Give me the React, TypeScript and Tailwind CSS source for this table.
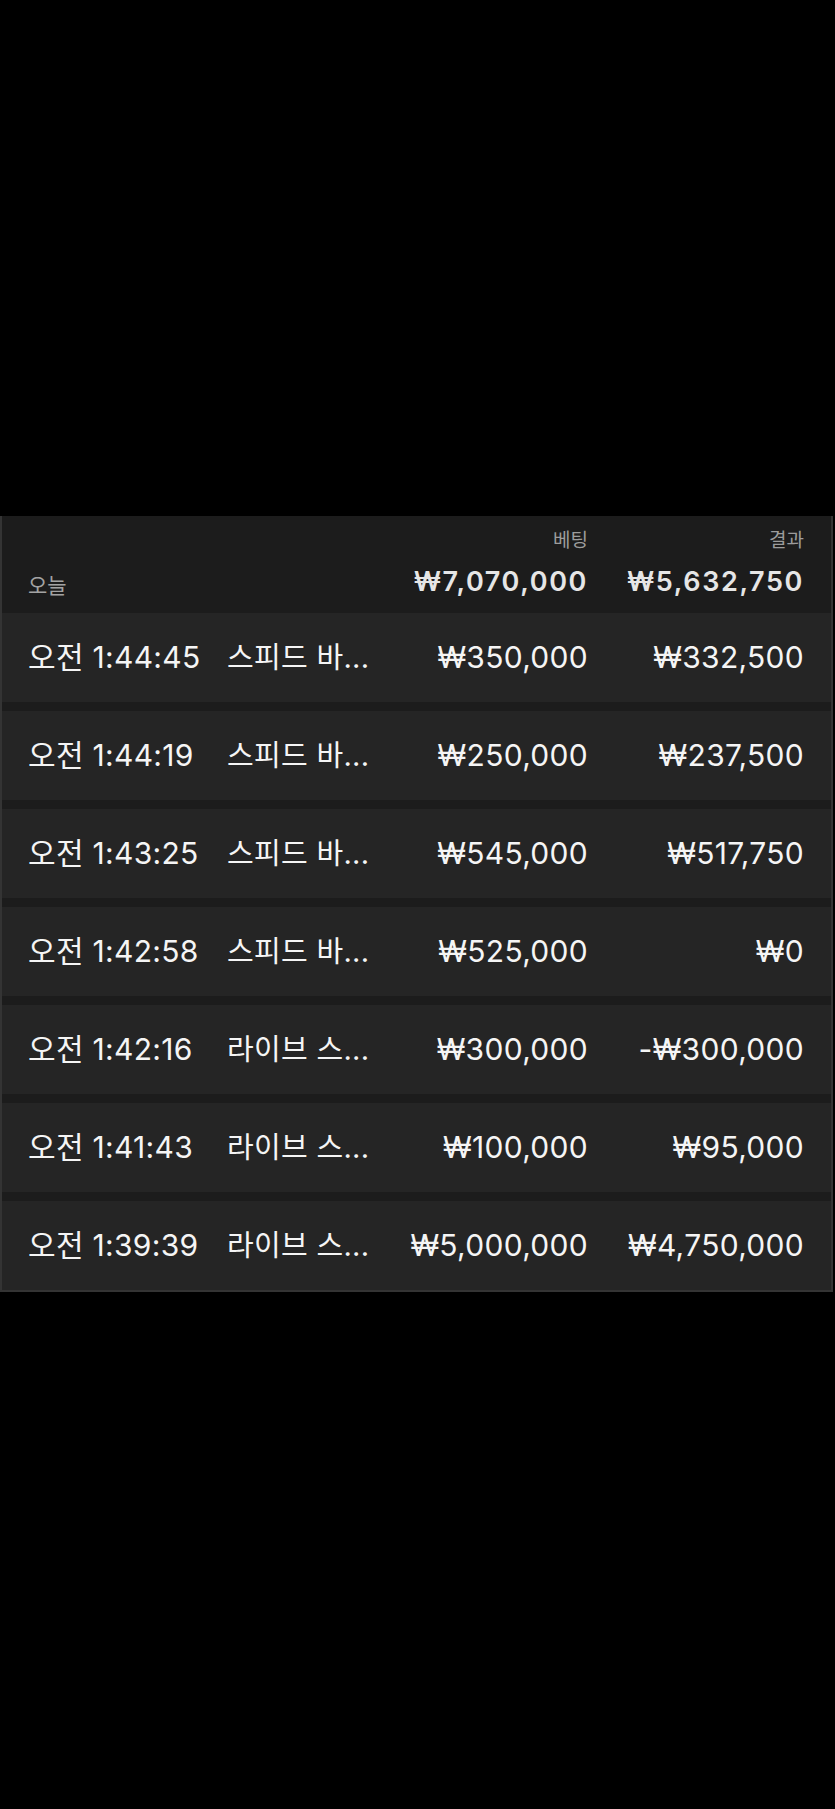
import React from "react";

type Bet = {
  time: string;
  game: string;
  stake: string;
  result: string;
};

const bets: Bet[] = [
  { time: "오전 1:44:45", game: "스피드 바...", stake: "₩350,000", result: "₩332,500" },
  { time: "오전 1:44:19", game: "스피드 바...", stake: "₩250,000", result: "₩237,500" },
  { time: "오전 1:43:25", game: "스피드 바...", stake: "₩545,000", result: "₩517,750" },
  { time: "오전 1:42:58", game: "스피드 바...", stake: "₩525,000", result: "₩0" },
  { time: "오전 1:42:16", game: "라이브 스...", stake: "₩300,000", result: "-₩300,000" },
  { time: "오전 1:41:43", game: "라이브 스...", stake: "₩100,000", result: "₩95,000" },
  { time: "오전 1:39:39", game: "라이브 스...", stake: "₩5,000,000", result: "₩4,750,000" },
];

const cols = "grid grid-cols-[199px_minmax(0,1fr)_200px_216px] pl-[26px] pr-[27px]";

export default function App() {
  return (
    <div
      className="min-h-screen bg-black"
      style={{ fontFamily: "Inter, 'Noto Sans CJK KR', sans-serif" }}
    >
      <div className="h-[516px]" />

      <section className="mr-[2px] border-x-2 border-b-2 border-[#343434] bg-[#1c1c1c]">
        {/* today summary */}
        <div className={`${cols} h-[97px] items-end pb-[15px]`}>
          <span className="col-span-2 mb-[-1px] text-[21px] leading-[26px] text-[#a3a3a3]">오늘</span>
          <div className="flex flex-col items-end">
            <span className="text-[19px] leading-[26px] text-[#9c9c9c]">베팅</span>
            <span className="mt-[12px] text-[27px] font-semibold leading-[32px] tracking-[0.06em] text-[#e6e6e6]">
              ₩7,070,000
            </span>
          </div>
          <div className="flex flex-col items-end">
            <span className="text-[19px] leading-[26px] text-[#9c9c9c]">결과</span>
            <span className="mt-[12px] text-[27px] font-semibold leading-[32px] tracking-[0.06em] text-[#e6e6e6]">
              ₩5,632,750
            </span>
          </div>
        </div>

        <div className="flex flex-col gap-[9px]">
          {bets.map((bet) => (
            <div
              key={bet.time}
              className={`${cols} h-[89px] items-center bg-[#252525] text-[30px] tracking-[0.01em] text-[#f5f5f5]`}
            >
              <span className="whitespace-nowrap">{bet.time}</span>
              <span className="truncate text-[29px]">{bet.game}</span>
              <span className="text-right">{bet.stake}</span>
              <span className="text-right">{bet.result}</span>
            </div>
          ))}
        </div>
      </section>
    </div>
  );
}
